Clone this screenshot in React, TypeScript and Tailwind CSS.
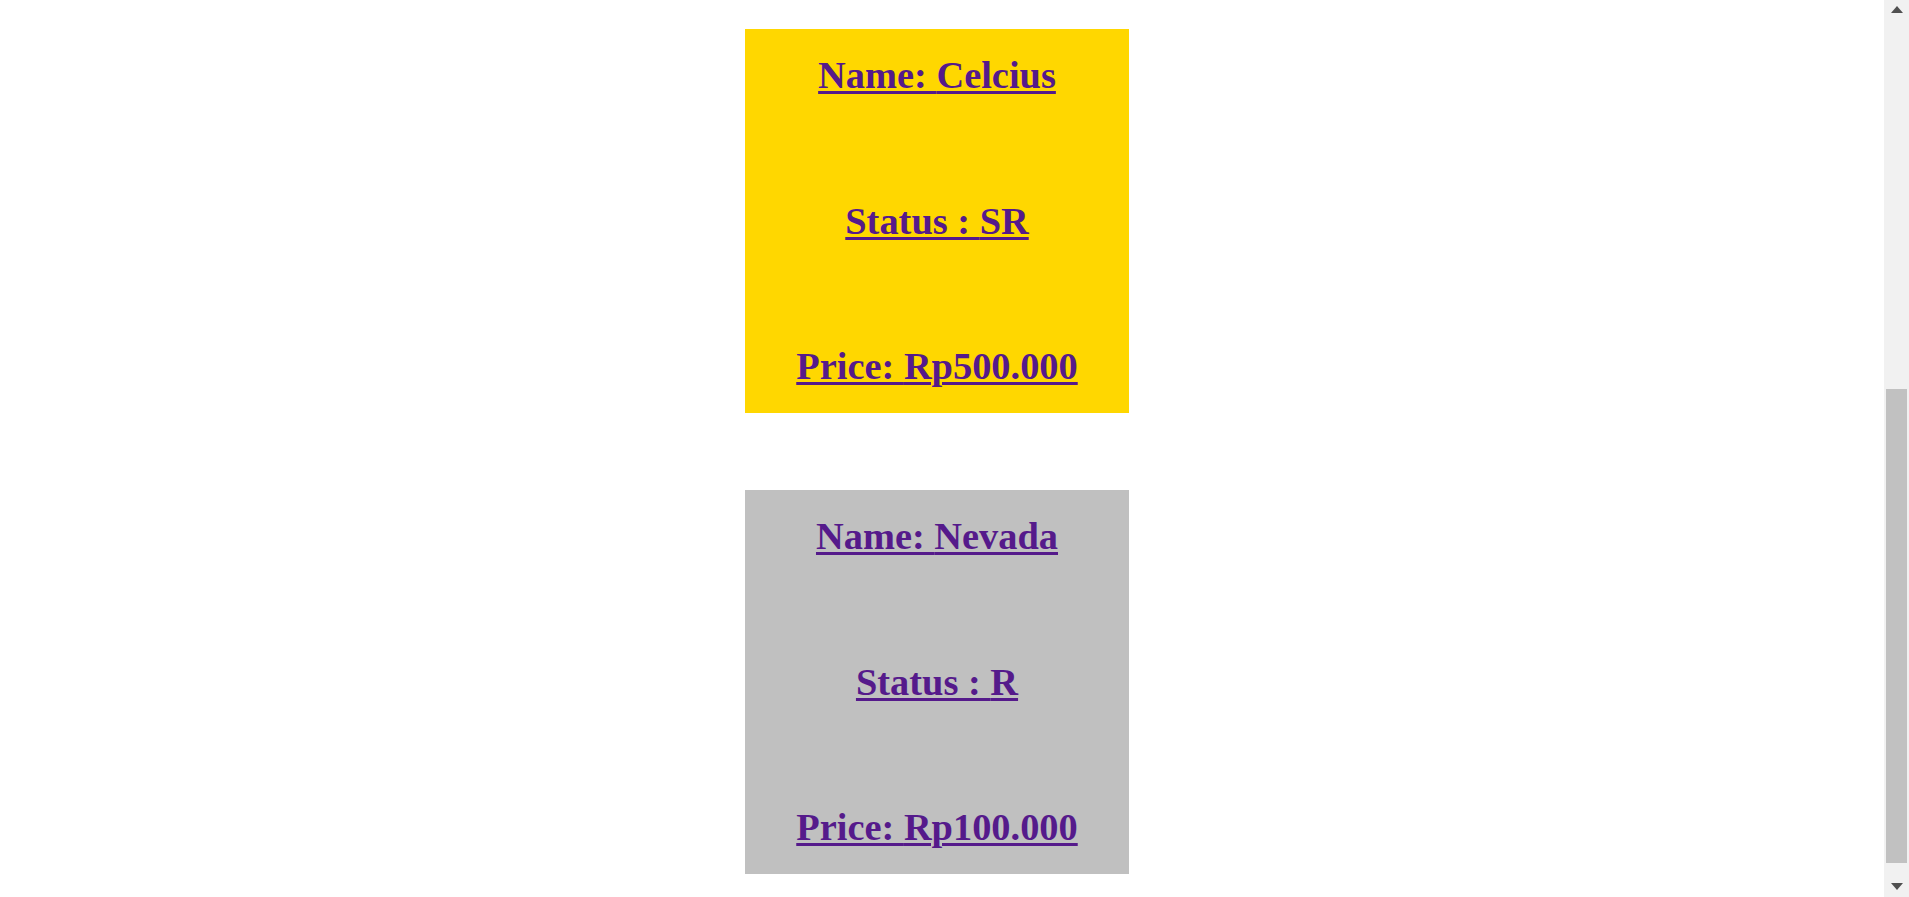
import React from "react";

const items = [
  { name: "Celcius", status: "SR", price: "Rp500.000", bg: "bg-[#ffd700]" },
  { name: "Nevada", status: "R", price: "Rp100.000", bg: "bg-[#c0c0c0]" },
];

function Card({ name, status, price, bg }: { name: string; status: string; price: string; bg: string }) {
  return (
    <a href="#" className={`flex h-[384px] w-[384px] flex-col items-center justify-between py-[25px] ${bg} text-[#551a8b] underline decoration-[3px] underline-offset-[3px]`}>
      <h1 className="text-[38.4px] font-bold leading-[43px]">Name: {name}</h1>
      <h1 className="text-[38.4px] font-bold leading-[43px]">Status : {status}</h1>
      <h1 className="text-[38.4px] font-bold leading-[43px]">Price: {price}</h1>
    </a>
  );
}

export default function App() {
  return (
    <div className="flex h-[897px] w-[1909px] overflow-hidden bg-white" style={{ fontFamily: '"Liberation Serif", "Times New Roman", serif' }}>
      <div className="flex flex-1 flex-col items-center gap-[77px] pr-[10px] pt-[29px]">
        {items.map((it) => (
          <Card key={it.name} {...it} />
        ))}
      </div>
      <div className="flex w-[25px] flex-col items-center bg-[#f1f1f1]">
        <div className="flex h-[20px] w-full items-center justify-center">
          <svg width="12" height="8" viewBox="0 0 12 8">
            <polygon points="6,0 12,7 0,7" fill="#505050" />
          </svg>
        </div>
        <div className="h-[369px]" />
        <div className="h-[474px] w-[21px] bg-[#c1c1c1]" />
        <div className="flex flex-1 items-end justify-center pb-[6px]">
          <svg width="12" height="8" viewBox="0 0 12 8">
            <polygon points="0,0 12,0 6,7" fill="#505050" />
          </svg>
        </div>
      </div>
    </div>
  );
}
